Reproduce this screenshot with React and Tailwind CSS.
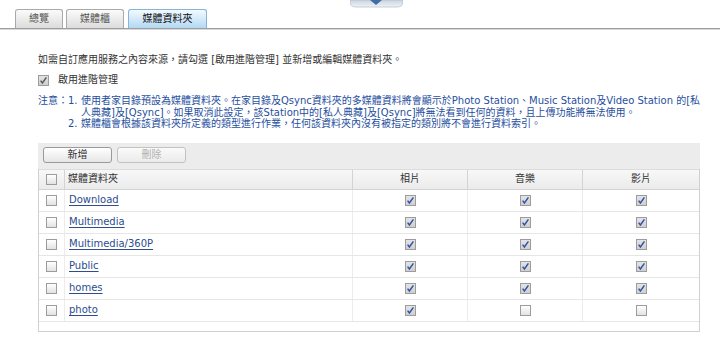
import React from "react";

function Box({ checked, tone = "blue" }) {
  return (
    <span
      className={
        "inline-flex w-[11px] h-[11px] shrink-0 border border-[#9c9c9c] " +
        (checked
          ? "bg-gradient-to-b from-[#e4e4e4] to-[#cfcfcf]"
          : "bg-gradient-to-b from-[#ffffff] to-[#e2e2e2]")
      }
    >
      {checked && (
        <svg width="9" height="9" viewBox="0 0 9 9" className="block">
          <path
            d="M1.6 4.6 L3.4 6.9 L7.4 1.4"
            fill="none"
            stroke={tone === "blue" ? "#3152a6" : "#5a5a5a"}
            strokeWidth="1.5"
          />
        </svg>
      )}
    </span>
  );
}

const rows = [
  { name: "Download", p: true, m: true, v: true },
  { name: "Multimedia", p: true, m: true, v: true },
  { name: "Multimedia/360P", p: true, m: true, v: true },
  { name: "Public", p: true, m: true, v: true },
  { name: "homes", p: true, m: true, v: true },
  { name: "photo", p: true, m: false, v: false },
];

export default function App() {
  return (
    <div className="w-[720px] h-[342px] bg-white overflow-hidden relative font-['DejaVu_Sans','Noto_Sans_CJK_TC',sans-serif] text-[10px] text-[#333]">
      <div className="relative h-[28px] flex items-end pl-[15px] gap-[3px]">
        <svg
          className="absolute left-[350px] top-0"
          width="53"
          height="8"
          viewBox="0 0 53 8"
        >
          <defs>
            <linearGradient id="bl" x1="0" y1="0" x2="0" y2="1">
              <stop offset="0" stopColor="#c9d4df" />
              <stop offset="1" stopColor="#eef2f6" />
            </linearGradient>
          </defs>
          <path
            d="M0 0 H53 V2 Q53 7 47 7 H6 Q0 7 0 2 Z"
            fill="url(#bl)"
            stroke="#b7c3cf"
            strokeWidth="0.8"
          />
          <path d="M20 0 H32 L26 5 Z" fill="#3f6ea5" />
        </svg>
        <div className="w-[48px] h-[19px] rounded-t-[3px] border border-b-0 border-[#a9a9a9] bg-gradient-to-b from-[#fbfbfb] to-[#dcdcdc] flex items-center justify-center text-[#555] leading-[12px]">
          總覽
        </div>
        <div className="w-[58px] h-[19px] rounded-t-[3px] border border-b-0 border-[#a9a9a9] bg-gradient-to-b from-[#fbfbfb] to-[#dcdcdc] flex items-center justify-center text-[#555] leading-[12px] ml-[0px]">
          媒體櫃
        </div>
        <div className="w-[79px] h-[19px] rounded-t-[3px] border border-b-0 border-[#86b3d6] bg-gradient-to-b from-[#f3faff] to-[#b3d9f3] flex items-center justify-center text-[#111] leading-[12px] ml-[1px]">
          媒體資料夾
        </div>
      </div>
      <div className="h-[1px] bg-[#9e9e9e]" />
      <div className="h-[1px] bg-[#d8d8d8]" />

      <div className="pl-[38px] pt-[24px]">
        <div className="leading-[12px] h-[12px]">
          如需自訂應用服務之內容來源，請勾選 [啟用進階管理] 並新增或編輯媒體資料夾。
        </div>
        <div className="mt-[8px] h-[12px] flex items-center gap-[9px] leading-[12px]">
          <Box checked tone="gray" />
          <span>啟用進階管理</span>
        </div>
        <div className="mt-[9px] w-[668px] flex text-[#1f4f9e] leading-[11.5px]">
          <span className="w-[30px] shrink-0">注意：</span>
          <div className="flex-1">
            <div className="flex">
              <span className="w-[13px] shrink-0">1.</span>
              <span className="flex-1">
                使用者家目錄預設為媒體資料夾。在家目錄及Qsync資料夾的多媒體資料將會顯示於Photo Station、Music Station及Video Station 的[私人典藏]及[Qsync]。如果取消此設定，該Station中的[私人典藏]及[Qsync]將無法看到任何的資料，且上傳功能將無法使用。
              </span>
            </div>
            <div className="flex">
              <span className="w-[13px] shrink-0">2.</span>
              <span className="flex-1">
                媒體櫃會根據該資料夾所定義的類型進行作業，任何該資料夾內沒有被指定的類別將不會進行資料索引。
              </span>
            </div>
          </div>
        </div>

        <div className="mt-[13px] w-[662px]">
          <div className="h-[26px] bg-[#ececec] pl-[5px] pt-[4px] flex gap-[5px]">
            <button className="w-[69px] h-[16px] rounded-[3px] border border-[#9a9a9a] bg-gradient-to-b from-[#ffffff] to-[#e6e6e6] text-[10px] leading-[12px] text-[#333]">
              新增
            </button>
            <button className="w-[69px] h-[16px] rounded-[3px] border border-[#c2c2c2] bg-gradient-to-b from-[#fafafa] to-[#ebebeb] text-[10px] leading-[12px] text-[#b0b0b0]">
              刪除
            </button>
          </div>
          <div className="border-x border-b border-[#d0d0d0]">
            <div className="grid grid-cols-[26px_288px_115px_115px_116px] h-[21px] bg-gradient-to-b from-[#f8f8f8] to-[#ebebeb] border-b border-[#d3d3d3] border-t border-t-[#dcdcdc]">
              <div className="border-r border-[#d3d3d3] flex items-center justify-center">
                <Box />
              </div>
              <div className="border-r border-[#d3d3d3] flex items-center pl-[3px] leading-[12px]">
                媒體資料夾
              </div>
              <div className="border-r border-[#d3d3d3] flex items-center justify-center leading-[12px]">
                相片
              </div>
              <div className="border-r border-[#d3d3d3] flex items-center justify-center leading-[12px]">
                音樂
              </div>
              <div className="flex items-center justify-center leading-[12px]">
                影片
              </div>
            </div>
            {rows.map((r) => (
              <div
                key={r.name}
                className="grid grid-cols-[26px_288px_115px_115px_116px] h-[22px] border-b border-[#e6e6e6]"
              >
                <div className="border-r border-[#ececec] flex items-center justify-center">
                  <Box />
                </div>
                <div className="border-r border-[#ececec] flex items-center pl-[4px] leading-[12px]">
                  <a className="text-[#2d4d8e] underline underline-offset-[2px]">
                    {r.name}
                  </a>
                </div>
                <div className="border-r border-[#ececec] flex items-center justify-center">
                  <Box checked={r.p} />
                </div>
                <div className="border-r border-[#ececec] flex items-center justify-center">
                  <Box checked={r.m} />
                </div>
                <div className="flex items-center justify-center">
                  <Box checked={r.v} />
                </div>
              </div>
            ))}
            <div className="h-[9px]" />
          </div>
        </div>
      </div>
    </div>
  );
}
